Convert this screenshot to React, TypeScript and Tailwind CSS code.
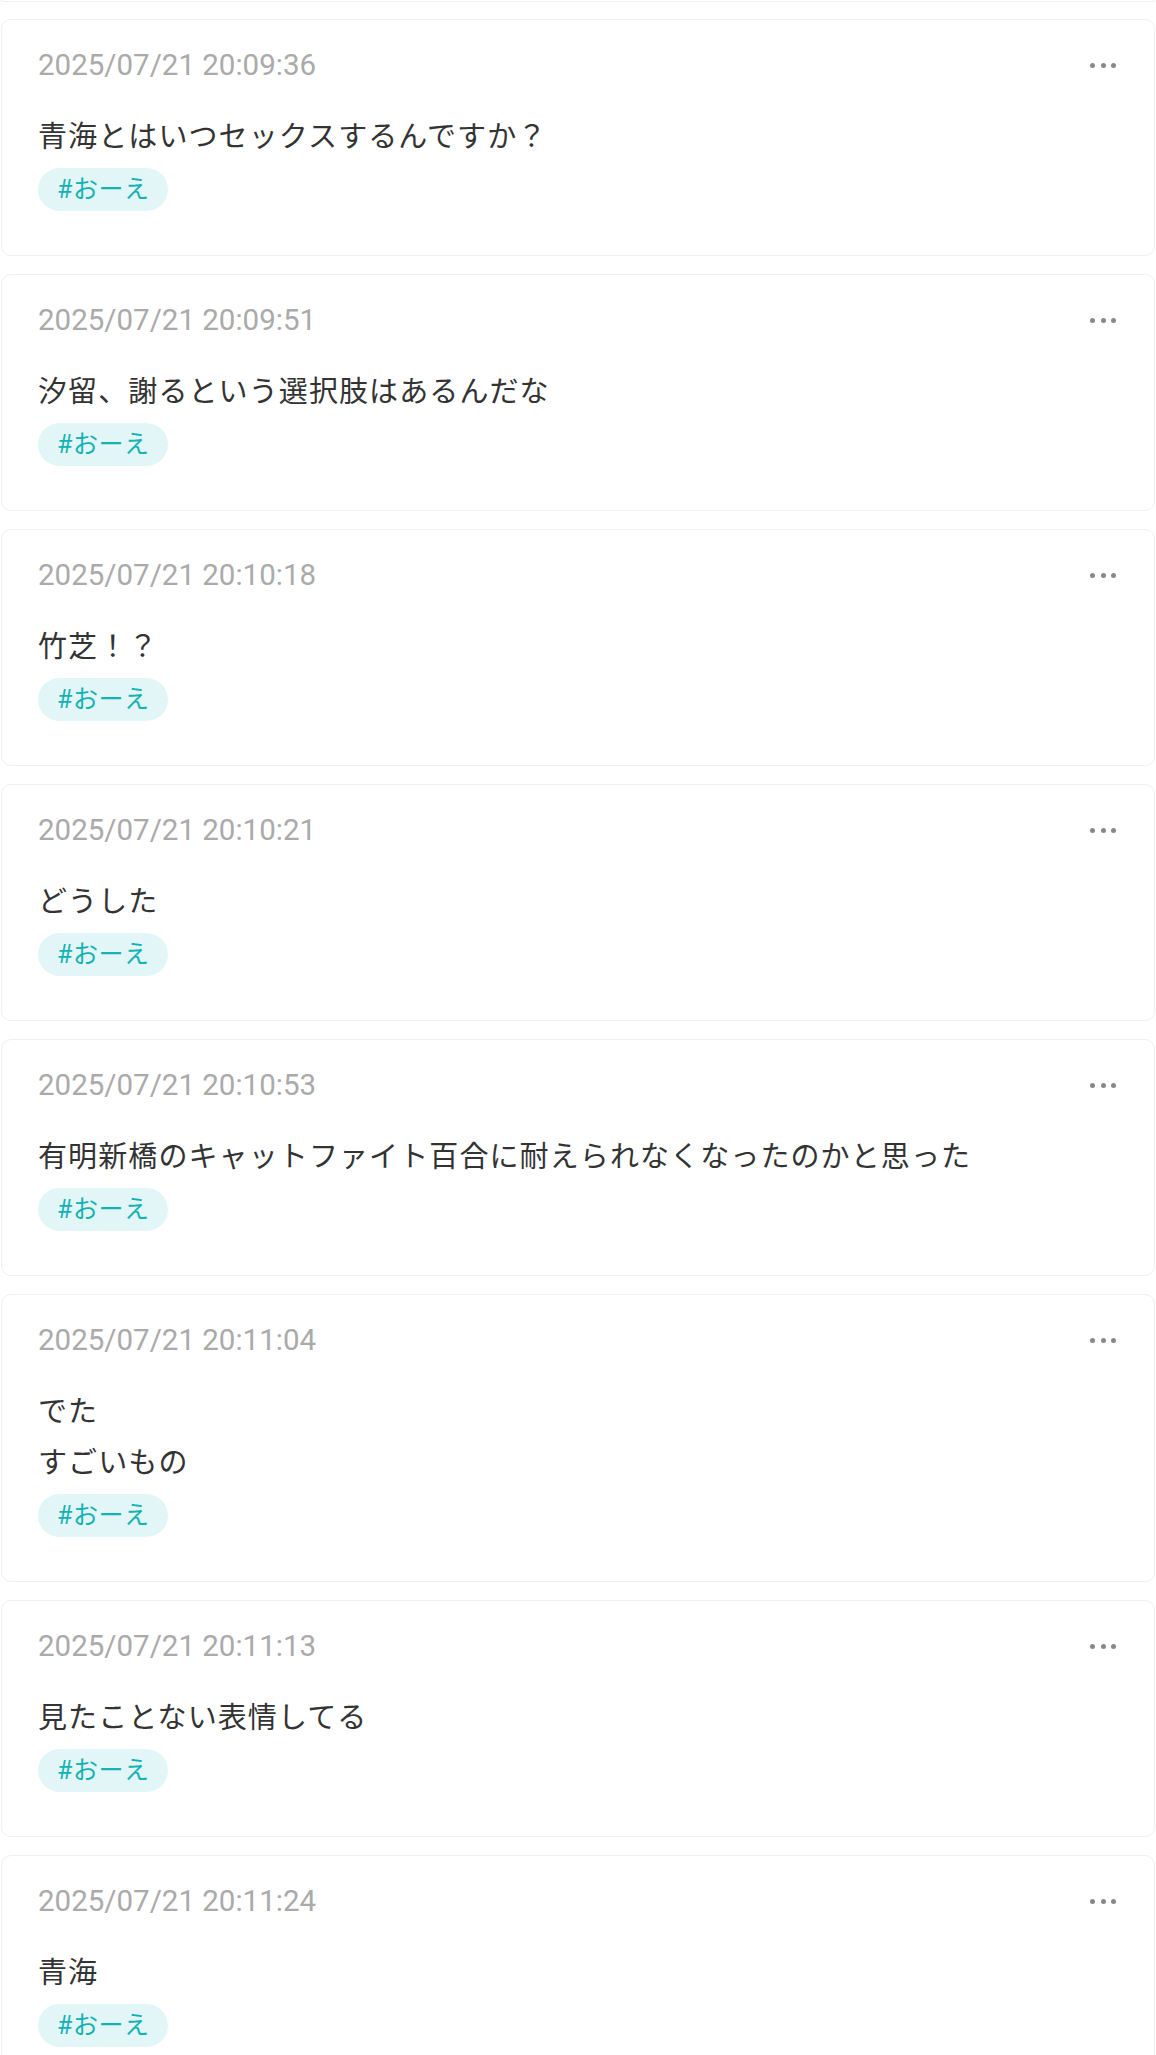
const posts = [
  { time: '2025/07/21 20:09:36', lines: ['青海とはいつセックスするんですか？'] },
  { time: '2025/07/21 20:09:51', lines: ['汐留、謝るという選択肢はあるんだな'] },
  { time: '2025/07/21 20:10:18', lines: ['竹芝！？'] },
  { time: '2025/07/21 20:10:21', lines: ['どうした'] },
  { time: '2025/07/21 20:10:53', lines: ['有明新橋のキャットファイト百合に耐えられなくなったのかと思った'] },
  { time: '2025/07/21 20:11:04', lines: ['でた', 'すごいもの'] },
  { time: '2025/07/21 20:11:13', lines: ['見たことない表情してる'] },
  { time: '2025/07/21 20:11:24', lines: ['青海'] },
];

function MoreDots() {
  return (
    <button className="flex items-center gap-[5.5px] h-[20px] px-0" aria-label="メニュー">
      <span className="w-[5px] h-[5px] rounded-full bg-[#888888]" />
      <span className="w-[5px] h-[5px] rounded-full bg-[#888888]" />
      <span className="w-[5px] h-[5px] rounded-full bg-[#888888]" />
    </button>
  );
}

function PostCard({ time, lines }: { time: string; lines: string[] }) {
  return (
    <div className="bg-white border border-[#efefef] rounded-[10px] pl-[36px] pr-[38px] pt-[23px] pb-[44px]">
      <div className="flex items-center justify-between h-[44px]">
        <span className="text-[29.5px] leading-[44px] text-[#aaaaaa]">{time}</span>
        <MoreDots />
      </div>
      <div className="mt-[25px] text-[29px] leading-[51px] tracking-[1.1px] text-[#333333]">
        {lines.map((l, i) => (
          <p key={i}>{l}</p>
        ))}
      </div>
      <div className="mt-[5px] flex">
        <span className="h-[43px] rounded-full bg-[#e2f6f7] text-[#15b2b4] text-[25px] leading-[43px] tracking-[0.5px] px-[19px]">
          #おーえ
        </span>
      </div>
    </div>
  );
}

export default function App() {
  return (
    <div
      className="min-h-screen bg-white px-[1px]"
      style={{ fontFamily: 'Roboto, "Noto Sans CJK JP", sans-serif' }}
    >
      <div className="h-[2px] border-x border-b border-[#efefef] rounded-b-[10px]" />
      <div className="mt-[17px] flex flex-col gap-[18px]">
        {posts.map((p) => (
          <PostCard key={p.time} time={p.time} lines={p.lines} />
        ))}
      </div>
    </div>
  );
}
